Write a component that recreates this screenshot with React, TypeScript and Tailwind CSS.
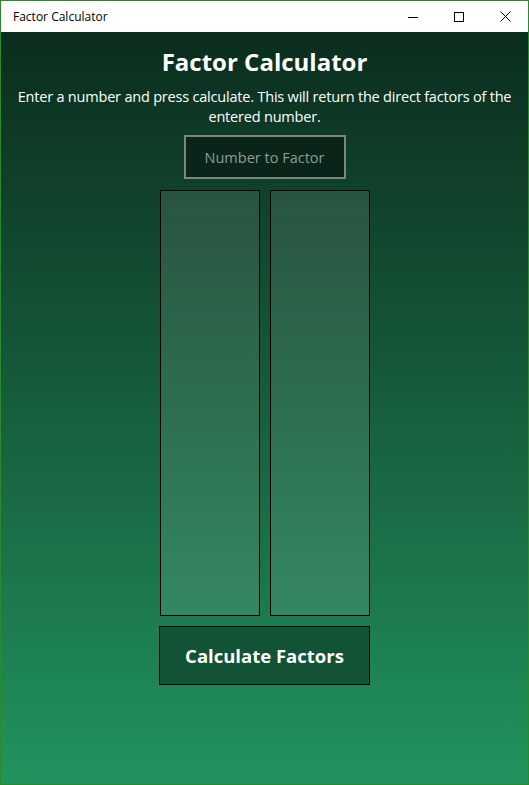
import { useState } from 'react'

export default function App() {
  const [value, setValue] = useState('')

  return (
    <div
      className="w-[529px] h-[785px] flex flex-col border border-[#2b8a2b] bg-white"
      style={{ fontFamily: '"Open Sans", "Noto Sans", sans-serif' }}
    >
      {/* title bar */}
      <div className="h-[31px] flex items-center justify-between bg-white shrink-0">
        <span className="pl-[12px] text-[12px] text-black">Factor Calculator</span>
        <div className="flex h-full">
          <div className="w-[46px] flex items-center justify-center">
            <svg width="10" height="10" viewBox="0 0 10 10">
              <path d="M0 5.5h10" stroke="#000" strokeWidth="1" />
            </svg>
          </div>
          <div className="w-[46px] flex items-center justify-center">
            <svg width="10" height="10" viewBox="0 0 10 10">
              <rect x="0.5" y="0.5" width="9" height="9" fill="none" stroke="#000" strokeWidth="1" />
            </svg>
          </div>
          <div className="w-[46px] flex items-center justify-center">
            <svg width="11" height="11" viewBox="0 0 11 11">
              <path d="M0.5 0.5l10 10M10.5 0.5l-10 10" stroke="#000" strokeWidth="1" />
            </svg>
          </div>
        </div>
      </div>

      {/* page */}
      <div className="flex-1 flex flex-col items-center bg-gradient-to-b from-[#0b2d1e] to-[#21945e] px-[10px]">
        <h1 className="mt-[14px] text-[24px] leading-[32px] font-bold text-white">Factor Calculator</h1>
        <p className="mt-[9px] text-[14.5px] leading-[20px] tracking-[-0.2px] text-white text-center">
          Enter a number and press calculate. This will return the direct factors of the entered number.
        </p>
        <input
          value={value}
          onChange={(e) => setValue(e.target.value)}
          placeholder="Number to Factor"
          className="mt-[8px] w-[162px] h-[44px] border-2 border-[#7f857f] bg-[#0a2419] text-center text-[14.5px] text-white placeholder:text-[#8f9c94] outline-none"
        />
        <div className="mt-[11px] flex gap-[10px]">
          <div className="w-[100px] h-[426px] border border-black bg-white/10" />
          <div className="w-[100px] h-[426px] border border-black bg-white/10" />
        </div>
        <button className="mt-[10px] w-[211px] h-[59px] border border-black bg-[#125235] text-[18.5px] font-bold text-white">
          Calculate Factors
        </button>
      </div>
    </div>
  )
}
